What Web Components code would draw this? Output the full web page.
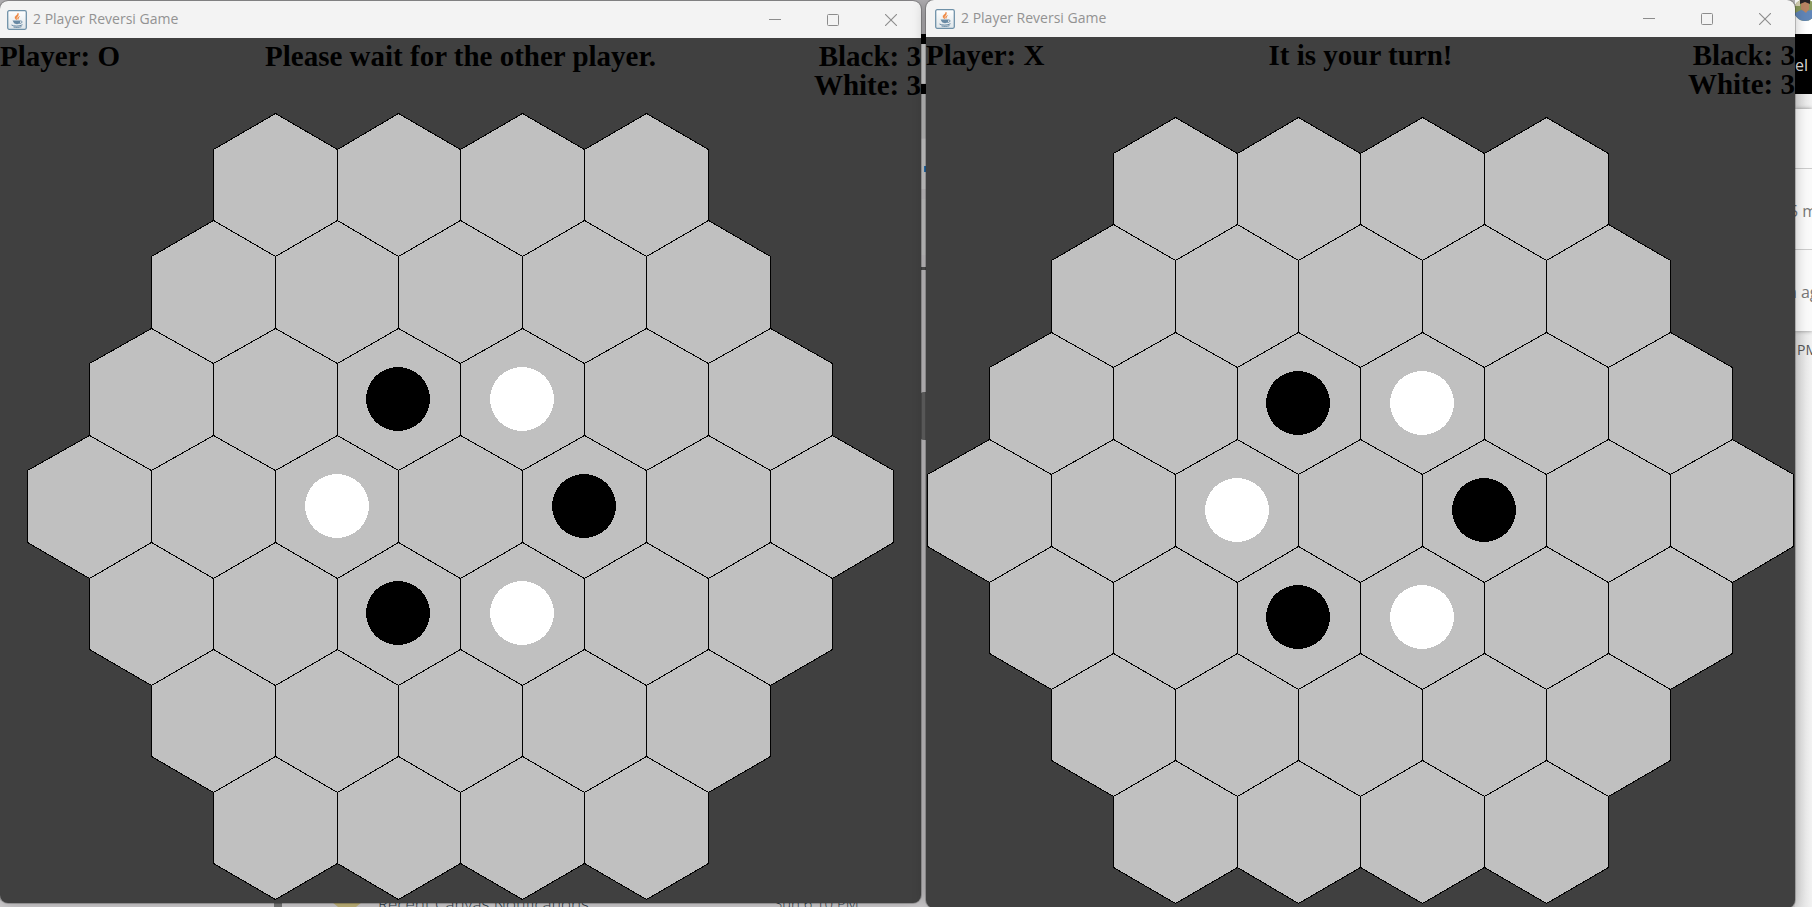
<!DOCTYPE html>
<html lang="en">
<head>
<meta charset="utf-8">
<title>2 Player Reversi Game</title>
<style>
html, body { margin: 0; height: 100%; }
body { overflow: hidden; font-family: "Open Sans", "Noto Sans", sans-serif; }
</style>
</head>
<body>
<desk-top>
  <page-behind slot="behind"></page-behind>
  <game-window class="left" heading="2 Player Reversi Game">
    <reversi-game player="O" message="Please wait for the other player." black="3" white="3"></reversi-game>
  </game-window>
  <game-window class="right" heading="2 Player Reversi Game">
    <reversi-game player="X" message="It is your turn!" black="3" white="3"></reversi-game>
  </game-window>
</desk-top>

<script>
const attach = (el, html) => { el.attachShadow({ mode: "open" }).innerHTML = html; };

customElements.define("desk-top", class extends HTMLElement {
  constructor() {
    super();
    attach(this, `
      <style>
        :host { display: block; position: relative; height: 100vh; overflow: hidden; background: #cfcdcf; }
        main { position: relative; display: grid; height: 100%; box-sizing: border-box;
          grid-template-columns: minmax(0, 921fr) minmax(0, 869fr); column-gap: 5px; padding-right: 17px; }
        ::slotted(page-behind) { position: absolute; inset: 0; }
        ::slotted(.left) { margin: 1px 0 4px; --head: 37px; --lead: 7px; --board-top: 75px; }
        ::slotted(.right) { margin-bottom: -1px; --head: 37px; --lead: 9px; --board-top: 80px; }
      </style>
      <slot name="behind"></slot>
      <main><slot></slot></main>`);
  }
});

/* The browser window that lies under both games; only its edges show. */
customElements.define("page-behind", class extends HTMLElement {
  constructor() {
    super();
    attach(this, `
      <style>
        :host { display: block; overflow: hidden; }
        div, span, svg { position: absolute; }
        .top { inset: 0 0 auto; height: 34px; background: #b9b7ba; }
        .bar { left: 920px; width: 10px; }
        .strip { top: 0; bottom: 0; right: 0; width: 17px; overflow: hidden;
          background: linear-gradient(90deg, #dcdcdc, #f2f2f2); font-size: 16px; line-height: 20px; color: #777; }
        .strip div { left: 0; right: 0; }
        .ava { left: 0; top: 0; }
        .foot { bottom: -7px; font: 300 17px/20px "Open Sans", sans-serif; color: #2d3b45; white-space: nowrap; }
        .date { font-size: 15px; bottom: -6px; }
      </style>
      <div class="top"></div>
      <div class="bar" style="top:34px;height:10px;background:#000"></div>
      <div class="bar" style="top:44px;height:39px;background:#dedede"></div>
      <div class="bar" style="top:84px;height:10px;background:#000"></div>
      <div class="bar" style="top:94px;height:44px;background:#c9c9c9"></div>
      <div class="bar" style="top:139px;height:50px;background:#d8d8d8"></div>
      <div class="bar" style="top:199px;height:56px;background:#d2d2d2"></div>
      <div class="bar" style="top:166px;height:6px;left:924px;width:3px;background:#2b7abc"></div>
      <div class="bar" style="top:267px;height:3px;background:#555"></div>
      <div class="bar" style="top:392px;height:48px;background:#6b6b6b;border-radius:4px"></div>
      <div style="left:274px;bottom:0;width:8px;height:6px;background:#777"></div>
      <svg style="left:332px;bottom:0" width="30" height="5"><path d="M0 0H30L24 5H6Z" fill="#c3b57a"/></svg>
      <span class="foot" style="left:378px">Recent Canvas Notifications</span>
      <span class="foot date" style="left:774px">Sun 6:10 PM</span>
      <div class="strip">
        <div style="top:0;height:34px;background:#fff"></div>
        <svg class="ava" width="17" height="22" viewBox="0 0 17 22">
          <clipPath id="c"><circle cx="10" cy="10" r="11"/></clipPath>
          <g clip-path="url(#c)"><path fill="#8a9a5c" d="M0 0h17v22H0z"/><path fill="#d6d1b4" d="M0 0h5v6H0z"/>
          <path fill="#6186b8" d="M0 22V13l6-3 5 1 6-1v12z"/><path fill="#b98463" d="M6 2h8v7l-3 4-5-4z"/><path fill="#262225" d="M5 0h10v4l-5-2-5 2z"/></g>
        </svg>
        <div style="top:34px;height:60px;background:#000;color:#ddd;line-height:63px">el</div>
        <div style="top:109px;height:222px;background:#fafafa;box-shadow:0 0 4px #888"></div>
        <div style="top:168px;height:1px;background:#ccc"></div>
        <div style="top:249px;height:1px;background:#ccc"></div>
        <span style="left:-6px;top:201px;white-space:nowrap">5 m</span>
        <span style="left:-8px;top:282px;white-space:nowrap">n ag</span>
        <span style="left:2px;top:340px;font-size:14px;color:#555">PM</span>
      </div>`);
  }
});

customElements.define("game-window", class extends HTMLElement {
  constructor() {
    super();
    attach(this, `
      <style>
        :host { display: flex; flex-direction: column; min-width: 0; overflow: hidden; position: relative;
          border-radius: 8px; background: #404040; box-shadow: 0 0 0 1px #0003, 0 0 14px #0004; }
        header { flex: none; height: var(--head); box-sizing: border-box; padding: 0 1px 0 var(--lead);
          display: flex; align-items: center; background: #f3f3f3; color: #929292; }
        .icon { margin-right: 6px; display: block; }
        h1 { flex: 1; margin: 0; padding-bottom: 1px; font: 400 14px/20px "Open Sans", "Noto Sans", sans-serif; }
        button { width: 58px; height: 36px; padding: 0; border: 0; background: none; color: #8c8c8c; display: grid; place-items: center; }
      </style>
      <header>
        <svg class="icon" width="20" height="20" viewBox="0 0 20 20" aria-hidden="true">
          <defs><linearGradient id="g" x2="0" y2="1"><stop stop-color="#fff"/><stop offset="1" stop-color="#dfe6ea"/></linearGradient></defs>
          <rect x=".7" y=".7" width="18.6" height="18.6" rx="1.5" fill="url(#g)" stroke="#6f91a8" stroke-width="1.3"/>
          <path d="M11 3C11 5 7.500 6 8 8c.2 1 1.200 1.300 1.500 2C10 8.500 9 8 10 7c1-1.200 2-2 1-4M12.500 6.500c-2 .8-2.500 1.700-1.500 3 .8-1 0-1.500 1.500-3" fill="#ee8640" stroke="#ee8640" stroke-width=".5"/>
          <path d="M5.500 10.500H13v2.500c-1 1.500-5 1.500-6 0Z" fill="#6889a3"/>
          <path d="M13 11c3-.5 2.500 2.500-.5 2.500M4.500 15c2 1.500 8.500 1.500 11-.3M6.500 17c3 .6 5.500.5 8-.3" fill="none" stroke="#6889a3"/>
        </svg>
        <h1></h1>
        <button aria-label="Minimize"><svg width="12" height="12"><path d="M0 5.500H12" stroke="currentColor"/></svg></button>
        <button aria-label="Maximize"><svg width="12" height="12"><rect x=".5" y=".5" width="11" height="11" rx="1" fill="none" stroke="currentColor"/></svg></button>
        <button aria-label="Close"><svg width="12" height="12"><path d="M0 0L12 12M12 0L0 12" stroke="currentColor" stroke-width="1.100"/></svg></button>
      </header>
      <slot></slot>`);
  }
  connectedCallback() { this.shadowRoot.querySelector("h1").textContent = this.getAttribute("heading"); }
});

customElements.define("reversi-game", class extends HTMLElement {
  constructor() {
    super();
    attach(this, `
      <style>
        :host { display: grid; flex: 1; align-content: start; color: #000;
          font: 700 29px/29px "Liberation Serif", "Times New Roman", serif; }
        .status { display: grid; grid-template-columns: 1fr auto 1fr; height: var(--board-top); box-sizing: border-box; padding-top: 4px; }
        p { margin: 0; white-space: nowrap; }
        .score { text-align: right; }
        hex-board { justify-self: center; }
      </style>
      <div class="status"><p class="player"></p><p class="message"></p>
        <div class="score"><p class="black"></p><p class="white"></p></div></div>
      <hex-board></hex-board>`);
  }
  connectedCallback() {
    const put = (name, text) => { this.shadowRoot.querySelector("." + name).textContent = text; };
    put("player", "Player: " + this.getAttribute("player"));
    put("message", this.getAttribute("message"));
    put("black", "Black: " + this.getAttribute("black"));
    put("white", "White: " + this.getAttribute("white"));
  }
});

customElements.define("hex-board", class extends HTMLElement {
  constructor() {
    super();
    const R = 71.45, W = R * Math.sqrt(3);
    const discs = { "2,2": "#000", "2,3": "#fff", "3,2": "#fff", "3,4": "#000", "4,2": "#000", "4,3": "#fff" };
    let cells = "", pieces = "";
    [4, 5, 6, 7, 6, 5, 4].forEach((count, row) => {
      for (let col = 0; col < count; col++) {
        const cx = 433.8 + (col - (count - 1) / 2) * W, cy = 393.7 + (row - 3) * 1.5 * R;
        const at = (dx, dy) => (Math.floor(cx + dx) + .5) + "," + (Math.floor(cy + dy) + .5);
        cells += `<polygon points="${[at(0, -R), at(W / 2, -R / 2), at(W / 2, R / 2), at(0, R), at(-W / 2, R / 2), at(-W / 2, -R / 2)].join(" ")}"/>`;
        const disc = discs[row + "," + col];
        if (disc) pieces += `<circle cx="${Math.floor(cx)}" cy="${Math.floor(cy)}" r="32" fill="${disc}"/>`;
      }
    });
    attach(this, `
      <style>
        :host { display: block; width: 867px; max-width: 100%; }
        svg { display: block; width: 100%; height: auto; overflow: visible; shape-rendering: crispEdges; }
        polygon { fill: #c0c0c0; stroke: #000; stroke-width: 1; }
      </style>
      <svg viewBox="0 0 867 788" role="img" aria-label="Hexagonal board">${cells}${pieces}</svg>`);
  }
});
</script>
</body>
</html>
